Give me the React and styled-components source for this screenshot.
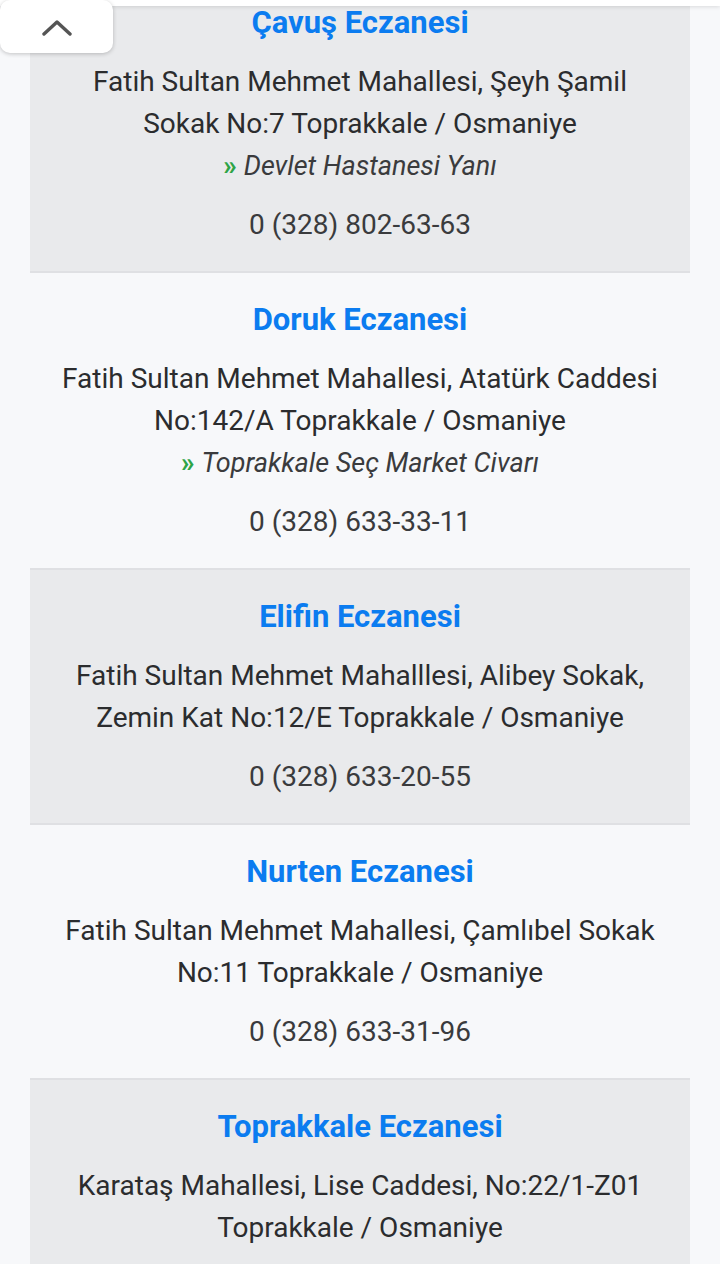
import React from 'react';
import styled, { createGlobalStyle } from 'styled-components';

const GlobalStyle = createGlobalStyle`
  html, body {
    margin: 0;
    padding: 0;
    background: #f7f8fa;
    font-family: Roboto, "Noto Sans", sans-serif;
  }
`;

const Page = styled.div`
  width: 720px;
  height: 1264px;
  overflow: hidden;
  position: relative;
  background: #f7f8fa;
`;

const TopBar = styled.div`
  position: absolute;
  top: 0;
  left: 0;
  right: 0;
  height: 6px;
  background: #fff;
  box-shadow: 0 1px 4px rgba(0, 0, 0, 0.12);
  z-index: 2;
`;

const UpButton = styled.button`
  position: absolute;
  top: 0;
  left: 0;
  width: 113px;
  height: 53px;
  border: none;
  border-radius: 10px;
  background: #fff;
  box-shadow: 0 1px 4px rgba(0, 0, 0, 0.22);
  display: flex;
  align-items: center;
  justify-content: center;
  padding: 0;
  z-index: 3;
`;

const List = styled.div`
  margin: -24px 30px 0;
  display: flex;
  flex-direction: column;
`;

const Card = styled.div`
  background: ${p => (p.$shaded ? '#e9eaec' : '#f7f8fa')};
  border-bottom: 2px solid #dfe0e3;
  padding: 29px 10px 25px;
  text-align: center;
`;

const Title = styled.div`
  color: #0b7cf0;
  font-size: 31px;
  font-weight: 700;
  line-height: 36px;
  margin-bottom: 20px;
`;

const Address = styled.div`
  color: #2b2c2e;
  font-size: 28px;
  line-height: 42px;
`;

const Note = styled.div`
  color: #3a3b3d;
  font-size: 27px;
  font-style: italic;
  line-height: 42px;
`;

const Arrow = styled.span`
  color: #2ea446;
  font-style: normal;
  font-weight: 700;
  margin-right: 7px;
`;

const Phone = styled.div`
  color: #3a3b3d;
  font-size: 28px;
  line-height: 42px;
  margin-top: 17px;
`;

const pharmacies = [
  {
    name: 'Çavuş Eczanesi',
    address: ['Fatih Sultan Mehmet Mahallesi, Şeyh Şamil', 'Sokak No:7 Toprakkale / Osmaniye'],
    note: 'Devlet Hastanesi Yanı',
    phone: '0 (328) 802-63-63',
  },
  {
    name: 'Doruk Eczanesi',
    address: ['Fatih Sultan Mehmet Mahallesi, Atatürk Caddesi', 'No:142/A Toprakkale / Osmaniye'],
    note: 'Toprakkale Seç Market Civarı',
    phone: '0 (328) 633-33-11',
  },
  {
    name: 'Elifin Eczanesi',
    address: ['Fatih Sultan Mehmet Mahalllesi, Alibey Sokak,', 'Zemin Kat No:12/E Toprakkale / Osmaniye'],
    phone: '0 (328) 633-20-55',
  },
  {
    name: 'Nurten Eczanesi',
    address: ['Fatih Sultan Mehmet Mahallesi, Çamlıbel Sokak', 'No:11 Toprakkale / Osmaniye'],
    phone: '0 (328) 633-31-96',
  },
  {
    name: 'Toprakkale Eczanesi',
    address: ['Karataş Mahallesi, Lise Caddesi, No:22/1-Z01', 'Toprakkale / Osmaniye'],
    phone: '0 (328) 633-00-00',
  },
];

const ChevronUp = () => (
  <svg width="32" height="18" viewBox="0 0 32 18" fill="none">
    <path d="M3 16 L16 4 L29 16" stroke="#555" strokeWidth="3.4" strokeLinecap="round" strokeLinejoin="round" />
  </svg>
);

export default function App() {
  return (
    <Page>
      <GlobalStyle />
      <TopBar />
      <UpButton aria-label="Yukarı">
        <ChevronUp />
      </UpButton>
      <List>
        {pharmacies.map((p, i) => (
          <Card key={p.name} $shaded={i % 2 === 0}>
            <Title>{p.name}</Title>
            <Address>
              {p.address.map(line => (
                <div key={line}>{line}</div>
              ))}
            </Address>
            {p.note && (
              <Note>
                <Arrow>»</Arrow>
                {p.note}
              </Note>
            )}
            <Phone>{p.phone}</Phone>
          </Card>
        ))}
      </List>
    </Page>
  );
}
